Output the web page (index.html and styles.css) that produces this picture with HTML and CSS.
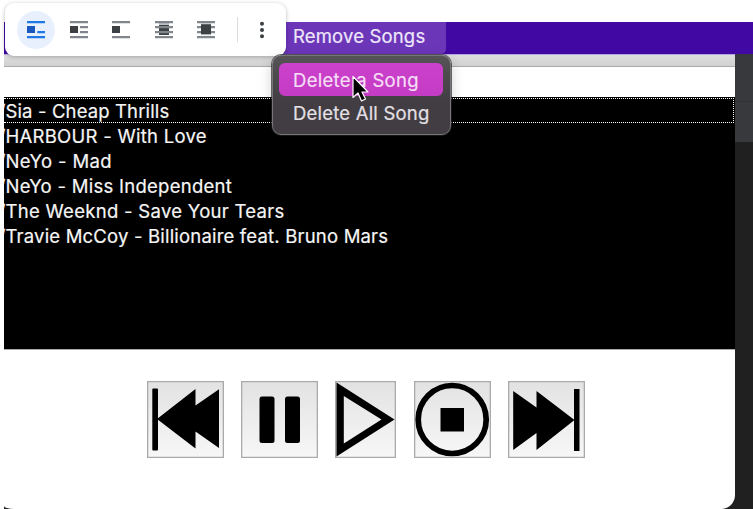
FILE: index.html
```html
<!DOCTYPE html>
<html lang="en">
<head>
<meta charset="utf-8">
<title>Music player</title>
<link rel="stylesheet" href="styles.css">
</head>
<body>
<main class="screen">
  <header class="menubar"><span class="menu-title">Remove Songs</span></header>
  <div class="desktop">
    <section class="player">
      <div class="titlebar"></div>
      <ul class="songs">
        <li class="song active"><span class="slash">/</span><span class="t1">Sia - Cheap Thrills</span></li>
        <li class="song"><span class="slash">/</span><span class="t2">HARBOUR - With Love</span></li>
        <li class="song"><span class="slash">/</span><span class="t3">NeYo - Mad</span></li>
        <li class="song"><span class="slash">/</span><span class="t4">NeYo - Miss Independent</span></li>
        <li class="song"><span class="slash">/</span><span class="t5">The Weeknd - Save Your Tears</span></li>
        <li class="song"><span class="slash">/</span><span class="t6">Travie McCoy - Billionaire feat. Bruno Mars</span></li>
      </ul>
      <div class="controls">
        <button class="control" aria-label="Previous"><svg width="77" height="77" viewBox="0 0 77 77"><rect x="5.300" y="7.500" width="5.700" height="62" rx="1"/><path d="M10 38 48.500 8V24.500L72 8.300V67L48.500 50.500V67.500Z"/></svg></button>
        <button class="control" aria-label="Pause"><svg width="77" height="77" viewBox="0 0 77 77"><rect x="18.500" y="15.500" width="15" height="46.500" rx="2.500"/><rect x="44" y="15.500" width="15" height="46.500" rx="2.500"/></svg></button>
        <button class="control play" aria-label="Play"><svg width="61" height="77" viewBox="0 0 61 77"><path fill-rule="evenodd" d="M1.500 1.500 59.500 38.500 1.500 75.500ZM8.800 15V62.500L46.500 38.500Z"/></svg></button>
        <button class="control" aria-label="Stop"><svg width="77" height="77" viewBox="0 0 77 77"><circle cx="38.200" cy="38.500" r="34" fill="none" stroke="#000" stroke-width="5.700"/><rect x="26.500" y="27" width="23.500" height="23.500"/></svg></button>
        <button class="control" aria-label="Next"><svg width="77" height="77" viewBox="0 0 77 77"><path d="M5.200 10 28.500 26.500V10L66.500 39 28.500 69V52L5.200 69Z"/><rect x="66" y="8" width="5.500" height="62"/></svg></button>
      </div>
    </section>
    <aside class="backdrop"></aside>
  </div>
</main>
<div class="toolbar">
  <span class="tool selected"><svg width="20" height="20" viewBox="0 0 20 20"><path fill="#2078e5" d="M1 1h18v2.200H1zM11.300 11h7.700v2.200h-7.700zM1 16h18v2.200H1z"/><path fill="#1959bd" d="M1 6h8v7H1z"/></svg></span>
  <span class="tool"><svg width="20" height="20" viewBox="0 0 20 20"><path fill="#80868b" d="M1 1h18v2.200H1zM11 6h8v2.200h-8zM11 11h8v2.200h-8zM1 16h18v2.200H1z"/><path fill="#3c4043" d="M1 6h8v7H1z"/></svg></span>
  <span class="tool"><svg width="20" height="20" viewBox="0 0 20 20"><path fill="#80868b" d="M1 1h18v2.200H1zM1 16h18v2.200H1z"/><path fill="#3c4043" d="M1 6h8v7H1z"/></svg></span>
  <span class="tool"><svg width="20" height="20" viewBox="0 0 20 20"><path fill="#bdc1c6" d="M5 3h10v2H5z"/><path fill="#3c4043" d="M5 5h10v10H5z"/><path fill="#80868b" d="M1 1h18v2.200H1zM1 6h18v2.200H1zM1 11h18v2.200H1zM1 16h18v2.200H1z"/></svg></span>
  <span class="tool"><svg width="20" height="20" viewBox="0 0 20 20"><path fill="#80868b" d="M1 1h18v2.200H1zM1 6h18v2.200H1zM1 11h18v2.200H1zM1 16h18v2.200H1z"/><path fill="#bdc1c6" d="M5 3.200h10v1H5zM5 14.300h10v1H5z"/><path fill="#3c4043" d="M5 4.200h10v10H5z"/></svg></span>
  <span class="divider"></span>
  <svg class="more" width="6" height="20" viewBox="0 0 6 20"><g fill="#3c4043"><circle cx="3" cy="3.700" r="2"/><circle cx="3" cy="10" r="2"/><circle cx="3" cy="16.300" r="2"/></g></svg>
</div>
<div class="dropdown">
  <div class="option highlighted"><span class="delete-one">Delete a Song</span></div>
  <div class="option"><span class="delete-all">Delete All Song</span></div>
</div>
<svg class="pointer" width="20" height="30" viewBox="0 0 20 30"><path d="M2 1.500V22.500L7 18 10.500 26 14.500 24 11 17H17Z" fill="#000" stroke="#fff" stroke-width="1.200" stroke-linejoin="round"/></svg>
</body>
</html>
```
FILE: styles.css
```css
* { box-sizing: border-box; }
body { margin: 0; height: 509px; overflow: hidden; background: #fff; font-family: Inter, "Liberation Sans", sans-serif; font-size: 18.5px; color: #f5f5f5; white-space: nowrap; -webkit-text-stroke: .2px; }
.screen { height: 509px; padding: 22px 0 0 4px; display: flex; flex-direction: column; }
.menubar { height: 32px; flex: none; background: #4108a3; padding-left: 269px; }
.menu-title { display: block; width: 173px; height: 32px; padding-left: 20px; line-height: 29px; color: #eee6fa; background: #6c36b9; border-radius: 0 0 5px 0; letter-spacing: .16px; }
.desktop { flex: 1; display: flex; background: #202021; }
.player { width: 731px; background: #fff; border-radius: 0 0 14px 10px / 0 0 14px 3px; overflow: hidden; }
.titlebar { height: 13px; background: linear-gradient(#dedede, #d1d1d1); border-top: 1px solid #b6a6df; border-bottom: 1px solid #aaa; }
.songs { list-style: none; margin: 30px 0 0; padding: 1px 1px 0 0; height: 253px; background: #000; border-bottom: 1px solid #aaa; overflow: hidden; }
.song { height: 25px; line-height: 27px; display: flex; }
.slash { width: 1.500px; flex: none; direction: rtl; }
.active { border: 1px dotted #fff; border-left: 0; line-height: 25px; }
.t1 { letter-spacing: .13px; }
.t2, .t4 { letter-spacing: .27px; }
.t3 { letter-spacing: .38px; }
.t5 { letter-spacing: .29px; }
.t6 { letter-spacing: .19px; }
.controls { display: flex; gap: 17px; padding: 31px 0 0 143px; }
.control { width: 77px; height: 77px; padding: 0; border: 0; background: linear-gradient(#e2e2e2, #f7f7f7); box-shadow: inset 0 0 0 1.300px #aaa; }
.control.play { width: 61px; margin-right: 1px; }
.control svg { display: block; }
.backdrop { flex: 1; background: linear-gradient(#38393c 0 47px, #303134 47px 48px, #38393c 48px 88px, #202021 88px); }
.toolbar { position: absolute; left: 5px; top: 3px; width: 281px; height: 53px; background: #fff; border-radius: 9px; box-shadow: 0 1px 4px #0004; display: flex; align-items: center; padding-left: 12px; }
.tool { width: 38px; height: 38px; margin-right: 4.500px; display: flex; align-items: center; justify-content: center; border-radius: 50%; }
.selected { background: #e8f0fe; }
.divider { width: 1px; height: 25px; background: #dadce0; margin-left: 7px; }
.more { margin-left: 21.500px; }
.dropdown { position: absolute; left: 272px; top: 55px; width: 179px; height: 80px; padding: 7px 7px 7px 6px; border: 1px solid #77777a; border-radius: 9px; background: linear-gradient(#565457, #413d42 60%); box-shadow: 0 0 0 1px #222a, 0 4px 14px #0003; }
.option { height: 33px; line-height: 34px; padding-left: 14px; border-radius: 6px; color: #e5e0e6; }
.highlighted { background: linear-gradient(#cb41cb, #c43bc4); color: #f6def6; }
.delete-one { letter-spacing: .29px; }
.delete-all { letter-spacing: .2px; }
.pointer { position: absolute; left: 351px; top: 75px; }
```
